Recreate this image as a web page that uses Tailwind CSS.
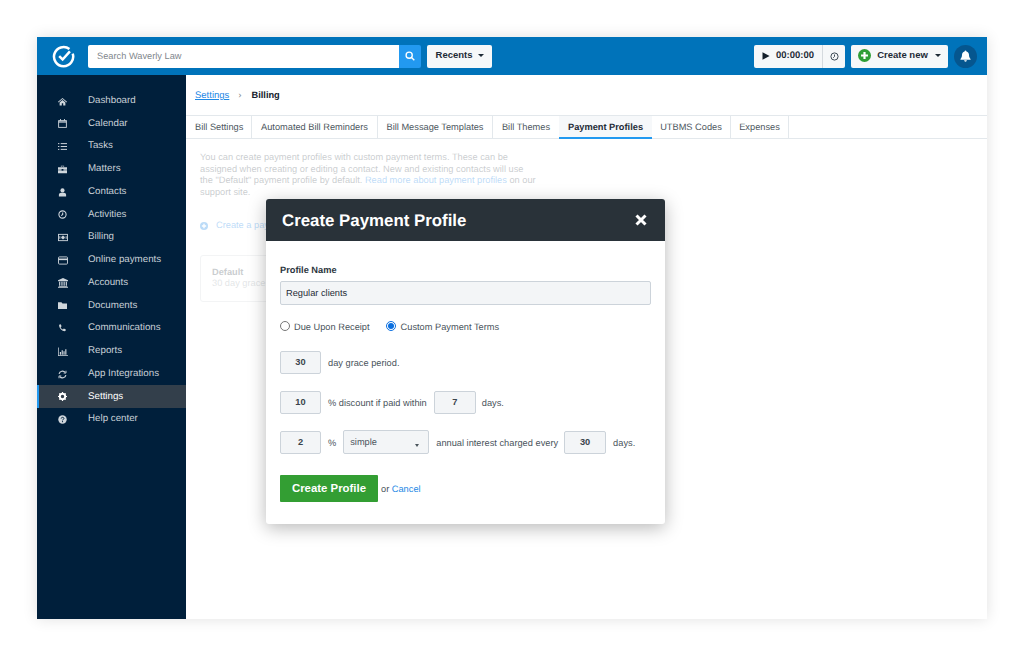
<!DOCTYPE html>
<html lang="en">
<head>
    <meta charset="UTF-8">
    <meta name="viewport" content="width=device-width, initial-scale=1.0">
    <title>Create Payment Profile</title>
    <script src="https://cdn.jsdelivr.net/npm/@tailwindcss/browser@4"></script>
</head>
<body class="bg-white font-['Liberation_Sans',Arial,sans-serif] [text-rendering:geometricPrecision] overflow-hidden">
<div class="pt-[37px] pl-[37px] h-[656px]">
    <div class="relative w-[950px] h-[582px] bg-white shadow-[0_0_14px_rgba(0,0,0,0.12)] flex flex-col">

        <!-- top bar -->
        <header class="h-[38px] bg-[#0073ba] flex items-center pl-[15px] pr-[10px] shrink-0">
            <svg class="w-[23px] h-[23px] shrink-0" viewBox="0 0 24 24" fill="none" stroke="#fff">
                <path d="M18.2 4.2A10 10 0 1 0 21.6 9" stroke-width="2.6"/>
                <path d="M7.5 11.5l3.6 3.6 7.6-8.4" stroke-width="2.6"/>
            </svg>
            <div class="ml-[13px] flex h-[23px] w-[333px] rounded-[2px] overflow-hidden">
                <div class="flex-1 bg-white pl-[9px] text-[9.25px] leading-[22px] text-[#7f878d]">Search Waverly Law</div>
                <div class="w-[22px] bg-[#2299f0] flex items-center justify-center">
                    <svg class="w-[10px] h-[10px]" viewBox="0 0 12 12" fill="none" stroke="#fff" stroke-width="1.6"><circle cx="5" cy="5" r="3.7"/><path d="M7.8 7.8l3.4 3.4"/></svg>
                </div>
            </div>
            <button class="ml-[6px] h-[23px] w-[65px] bg-[#f6f8f9] rounded-[2px] flex items-center justify-center gap-[6px] pl-[1px] pb-[1px] text-[9.5px] font-bold text-[#1e2b36]">
                Recents
                <span class="border-x-[3px] border-x-transparent border-t-[3px] border-t-[#1e2b36]"></span>
            </button>

            <div class="ml-auto flex h-[23px] w-[91px] bg-[#f6f8f9] rounded-[2px] text-[#1e2b36]">
                <div class="flex-1 flex items-center justify-center gap-[6px] border-r border-[#d5dade] text-[9.5px] font-bold">
                    <svg class="w-[8px] h-[8px]" viewBox="0 0 8 8" fill="#14202b"><path d="M0.5 0.3L7.6 4 0.5 7.7z"/></svg>
                    00:00:00
                </div>
                <div class="w-[22px] flex items-center justify-center">
                    <svg class="w-[9px] h-[9px]" viewBox="0 0 10 10" fill="none" stroke="#3c4953" stroke-width="1.1"><circle cx="5" cy="5" r="4"/><path d="M5 2.8V5L3.6 6.4"/></svg>
                </div>
            </div>
            <button class="ml-[6px] h-[23px] w-[97px] bg-[#f6f8f9] rounded-[2px] flex items-center justify-center gap-[6px] pb-[1px] text-[9.5px] font-bold text-[#1e2b36]">
                <svg class="w-[13px] h-[13px]" viewBox="0 0 12 12"><circle cx="6" cy="6" r="6" fill="#2f9e36"/><path d="M6 2.8v6.4M2.8 6h6.4" stroke="#fff" stroke-width="2"/></svg>
                Create new
                <span class="ml-[1px] border-x-[3px] border-x-transparent border-t-[3px] border-t-[#1e2b36]"></span>
            </button>
            <div class="ml-[6px] w-[23px] h-[23px] rounded-full bg-[#05568f] flex items-center justify-center">
                <svg class="w-[11px] h-[12px]" viewBox="0 0 12 13" fill="#fff"><path d="M6 0.5c-.6 0-1 .4-1 1C3.200 2 2.200 3.300 2.200 5.200c0 2.500-.8 3.600-1.700 4.500v.8h11v-.8c-.9-.9-1.700-2-1.700-4.500C9.800 3.300 8.800 2 7 1.500c0-.6-.4-1-1-1zM4.500 11.200a1.500 1.500 0 0 0 3 0z"/></svg>
            </div>
        </header>

        <div class="flex flex-1 min-h-0">
            <!-- sidebar -->
            <nav class="w-[149px] bg-[#001f3b] pt-[14px] text-[9.75px] text-[#c8d0d7] shrink-0">
                <a class="flex items-center h-[22.75px] pl-[21px] pt-[1.5px]"><svg class="w-[9px] h-[9px] mr-[21px]" viewBox="0 0 10 10" fill="#cfd6dc"><path d="M5 1L0 5.400l.6.600L5 2.300 9.400 6l.6-.6zM1.800 6v3.400h2.400V7h1.600v2.400h2.400V6L5 3.300z"/></svg>Dashboard</a>
                <a class="flex items-center h-[22.75px] pl-[21px] pt-[1.5px]"><svg class="w-[9px] h-[9px] mr-[21px]" viewBox="0 0 10 10" fill="none" stroke="#cfd6dc"><rect x="0.700" y="1.800" width="8.600" height="7.500"/><path d="M.7 3.300h8.600" stroke-width="1.400"/><path d="M2.800 0v2M7.200 0v2"/></svg>Calendar</a>
                <a class="flex items-center h-[22.75px] pl-[21px] pt-[1.5px]"><svg class="w-[9px] h-[9px] mr-[21px]" viewBox="0 0 10 10" fill="none" stroke="#cfd6dc" stroke-width="1.100"><path d="M0 1.800h1.500M3 1.800h7M0 5h1.500M3 5h7M0 8.200h1.500M3 8.200h7"/></svg>Tasks</a>
                <a class="flex items-center h-[22.75px] pl-[21px] pt-[1.5px]"><svg class="w-[9px] h-[9px] mr-[21px]" viewBox="0 0 10 10" fill="#cfd6dc"><path d="M3.200 2V.8h3.600V2H6V1.500H4V2zM0 2.400h10v2.800H6v-.7H4v.7H0zM0 5.800h4v.7h2v-.7h4v3.400H0z"/></svg>Matters</a>
                <a class="flex items-center h-[22.75px] pl-[21px] pt-[1.5px]"><svg class="w-[9px] h-[9px] mr-[21px]" viewBox="0 0 10 10" fill="#cfd6dc"><circle cx="5" cy="2.700" r="2.300"/><path d="M1 9.500V7.500C1 6 2.200 5.200 3.400 5.200h3.200C7.800 5.200 9 6 9 7.500v2z"/></svg>Contacts</a>
                <a class="flex items-center h-[22.75px] pl-[21px] pt-[1.5px]"><svg class="w-[9px] h-[9px] mr-[21px]" viewBox="0 0 10 10" fill="none" stroke="#cfd6dc" stroke-width="1.200"><circle cx="5" cy="5" r="4"/><path d="M5.200 2.800V5L3.600 6.300"/></svg>Activities</a>
                <a class="flex items-center h-[22.75px] pl-[21px] pt-[1.5px]"><svg class="w-[10px] h-[9px] mr-[20px]" viewBox="0 0 11 10" fill="none" stroke="#cfd6dc"><rect x="0.500" y="1.500" width="10" height="7"/><circle cx="5.500" cy="5" r="1.500" fill="#cfd6dc"/><path d="M2 3.500v3M9 3.500v3"/></svg>Billing</a>
                <a class="flex items-center h-[22.75px] pl-[21px] pt-[1.5px]"><svg class="w-[10px] h-[9px] mr-[20px]" viewBox="0 0 11 10" fill="none" stroke="#cfd6dc"><rect x="0.500" y="1" width="10" height="8" rx="1"/><path d="M.5 3.700h10" stroke-width="1.800"/></svg>Online payments</a>
                <a class="flex items-center h-[22.75px] pl-[21px] pt-[1.5px]"><svg class="w-[10px] h-[10px] mr-[20px]" viewBox="0 0 11 11" fill="#cfd6dc"><path d="M5.500 0L0 2.500v1h11v-1zM1.200 4.200h1.300v4.300H1.200zM3.700 4.200H5v4.300H3.700zM6.100 4.200h1.300v4.300H6.100zM8.500 4.200h1.300v4.300H8.500zM.7 9h9.600v.8H.7zM0 10.200h11v.8H0z"/></svg>Accounts</a>
                <a class="flex items-center h-[22.75px] pl-[21px] pt-[1.5px]"><svg class="w-[9px] h-[9px] mr-[21px]" viewBox="0 0 10 10" fill="#cfd6dc"><path d="M0 1.500h3.800L5 2.800h5v6H0z"/></svg>Documents</a>
                <a class="flex items-center h-[22.75px] pl-[21px] pt-[1.5px]"><svg class="w-[9px] h-[9px] mr-[21px]" viewBox="0 0 10 10" fill="#cfd6dc"><path d="M1.200.8L3 .3l1 2.300-1.100.9c.5 1.200 1.400 2.100 2.600 2.700l1-1.200 2.200 1-.4 1.900C5 8.500 1 4.700 1.200.8z"/></svg>Communications</a>
                <a class="flex items-center h-[22.75px] pl-[21px] pt-[1.5px]"><svg class="w-[10px] h-[9px] mr-[20px]" viewBox="0 0 11 10" fill="#cfd6dc"><path d="M0 .5h.8v8.700H11v.8H0zM2 5.500h1.300v3H2zM4 3.500h1.300v5H4zM6 4.800h1.300v3.700H6zM8 2.500h1.300v6H8z"/></svg>Reports</a>
                <a class="flex items-center h-[22.75px] pl-[21px] pt-[1.5px]"><svg class="w-[9px] h-[9px] mr-[21px]" viewBox="0 0 10 10" fill="none" stroke="#cfd6dc" stroke-width="1.300"><path d="M1.200 4.200A3.900 3.900 0 0 1 8 2.700M8.800 5.800A3.900 3.900 0 0 1 2 7.300"/><path d="M8.900.8v2.600H6.300M1.100 9.200V6.600h2.600" stroke-width="1"/></svg>App Integrations</a>
                <a class="flex items-center h-[22.75px] pl-[21px] pt-[1.5px] bg-[#333f4b] text-white font-medium relative"><span class="absolute left-0 inset-y-0 w-[2px] bg-[#2299f0]"></span><svg class="w-[9px] h-[9px] mr-[21px]" viewBox="0 0 10 10"><circle cx="5" cy="5" r="3" fill="none" stroke="#fff" stroke-width="2.200"/><path d="M5 0v10M0 5h10M1.500 1.500l7 7M8.500 1.500l-7 7" stroke="#fff" stroke-width="1.200" stroke-dasharray="1.600 6.800"/></svg>Settings</a>
                <a class="flex items-center h-[22.75px] pl-[21px] pt-[1.5px]"><svg class="w-[9px] h-[9px] mr-[21px]" viewBox="0 0 10 10"><circle cx="5" cy="5" r="4.700" fill="#cfd6dc"/><path d="M3.500 3.900C3.600 2.200 6.600 2.200 6.600 3.800 6.600 4.900 5 4.900 5 6" fill="none" stroke="#001f3b" stroke-width="1.100"/><path d="M4.400 6.800h1.200V8H4.400z" fill="#001f3b"/></svg>Help center</a>
            </nav>

            <main class="flex-1 min-w-0 flex flex-col text-[9.25px] text-[#4d5760]">
                <div class="h-[40px] flex items-center pl-[9px] pt-[2px] text-[9.5px]">
                    <a class="text-[#1e88e5] underline">Settings</a>
                    <span class="ml-[9px] mr-[10px] text-[#7f878d]">›</span>
                    <span class="font-bold text-[#14202b] text-[9.25px]">Billing</span>
                </div>
                <div class="flex h-[24px] border-y border-[#e3e8ec] leading-[23px]">
                    <a class="w-[66px] pl-[9px] border-r border-[#e3e8ec]">Bill Settings</a>
                    <a class="w-[126px] text-center border-r border-[#e3e8ec]">Automated Bill Reminders</a>
                    <a class="w-[115px] text-center border-r border-[#e3e8ec]">Bill Message Templates</a>
                    <a class="w-[66px] text-center">Bill Themes</a>
                    <a class="w-[93px] text-center font-bold text-[#1e2b36] bg-[#f6f8fa] border-b-2 border-[#2299f0] h-[23px]">Payment Profiles</a>
                    <a class="w-[79px] text-center border-r border-[#e3e8ec]">UTBMS Codes</a>
                    <a class="w-[58px] text-center border-r border-[#e3e8ec]">Expenses</a>
                </div>
                <!-- faded behind the dialog -->
                <div class="relative flex-1 pl-[14px] pt-[13px]">
                    <p class="w-[337px] leading-[11.5px]">You can create payment profiles with custom payment terms. These can be assigned when creating or editing a contact. New and existing contacts will use the "Default" payment profile by default. <a class="text-[#1e88e5]">Read more about payment profiles</a> on our support site.</p>
                    <div class="mt-[21px] flex items-center text-[#1e88e5]">
                        <svg class="w-[8px] h-[8px] mr-[8px]" viewBox="0 0 12 12"><circle cx="6" cy="6" r="6" fill="#1e88e5"/><path d="M6 2.800v6.400M2.800 6h6.400" stroke="#fff" stroke-width="2"/></svg>
                        Create a payment profile
                    </div>
                    <div class="mt-[22px] w-[200px] h-[47px] border border-[#d5dade] rounded-[3px] pl-[11px] pt-[11px] leading-[11.5px]">
                        <div class="font-bold">Default</div>
                        <div class="text-[#a0a8ae]">30 day grace period</div>
                    </div>
                    <div class="absolute inset-0 bg-white/70"></div>
                </div>
            </main>
        </div>

        <!-- dialog -->
        <div class="absolute left-[229px] top-[162px] w-[399px] h-[325px] bg-white rounded-[3px] shadow-[0_4px_18px_rgba(0,0,0,0.28)] text-[9.25px] text-[#4a545c]">
            <div class="h-[42px] bg-[#293239] rounded-t-[3px] flex items-center justify-between pl-[16px] pr-[18px]">
                <h2 class="pt-[1px] text-[16.85px] font-bold text-white">Create Payment Profile</h2>
                <svg class="w-[12px] h-[12px]" viewBox="0 0 12 12" stroke="#fff" stroke-width="3"><path d="M1.500 1.500l9 9M10.500 1.500l-9 9"/></svg>
            </div>
            <div class="px-[14px] pt-[24px]">
                <label class="block font-bold text-[#2c363e] leading-[11px]">Profile Name</label>
                <input class="mt-[5px] block w-[371px] h-[24px] px-[5px] bg-[#f3f5f7] border border-[#ccd3da] rounded-[2px] text-[9.25px] text-[#1e2b36]" value="Regular clients">
                <div class="mt-[15px] h-[12px] flex items-center">
                    <input type="radio" name="terms" class="w-[10px] h-[10px] m-0 accent-[#0a6fe0]">
                    <span class="ml-[4px] mt-[3px]">Due Upon Receipt</span>
                    <input type="radio" name="terms" checked class="ml-[16px] w-[10px] h-[10px] m-0 accent-[#0a6fe0]">
                    <span class="ml-[5px] mt-[3px]">Custom Payment Terms</span>
                </div>
                <div class="mt-[18px] flex items-center h-[24px]">
                    <input class="w-[41px] h-[23px] bg-[#f3f5f7] border border-[#ccd3da] rounded-[2px] text-center font-bold text-[9.25px] text-[#3a444c]" value="30">
                    <span class="ml-[7px] mt-[3px]">day grace period.</span>
                </div>
                <div class="mt-[16px] flex items-center h-[24px]">
                    <input class="w-[41px] h-[23px] bg-[#f3f5f7] border border-[#ccd3da] rounded-[2px] text-center font-bold text-[9.25px] text-[#3a444c]" value="10">
                    <span class="ml-[7px] mt-[3px]">% discount if paid within</span>
                    <input class="ml-[7px] w-[42px] h-[23px] bg-[#f3f5f7] border border-[#ccd3da] rounded-[2px] text-center font-bold text-[9.25px] text-[#3a444c]" value="7">
                    <span class="ml-[6px] mt-[3px]">days.</span>
                </div>
                <div class="mt-[16px] flex items-center h-[24px]">
                    <input class="w-[41px] h-[23px] bg-[#f3f5f7] border border-[#ccd3da] rounded-[2px] text-center font-bold text-[9.25px] text-[#3a444c]" value="2">
                    <span class="ml-[7px] mt-[3px]">%</span>
                    <div class="ml-[7px] relative w-[86px] h-[24px] bg-[#f3f5f7] border border-[#ccd3da] rounded-[2px] pl-[6px] leading-[22px]">
                        simple
                        <span class="absolute right-[9px] top-[13px] border-x-[2px] border-x-transparent border-t-[3px] border-t-[#4a545c]"></span>
                    </div>
                    <span class="ml-[7px] mt-[3px]">annual interest charged every</span>
                    <input class="ml-[6px] w-[42px] h-[23px] bg-[#f3f5f7] border border-[#ccd3da] rounded-[2px] text-center font-bold text-[9.25px] text-[#3a444c]" value="30">
                    <span class="ml-[7px] mt-[3px]">days.</span>
                </div>
                <div class="mt-[21px] flex items-center">
                    <button class="w-[98px] h-[27px] bg-[#339e33] rounded-[1px] text-[11.4px] font-bold text-white">Create Profile</button>
                    <span class="ml-[3px] mt-[3px]">or <a class="text-[#1e88e5]">Cancel</a></span>
                </div>
            </div>
        </div>
    </div>
</div>
</body>
</html>
